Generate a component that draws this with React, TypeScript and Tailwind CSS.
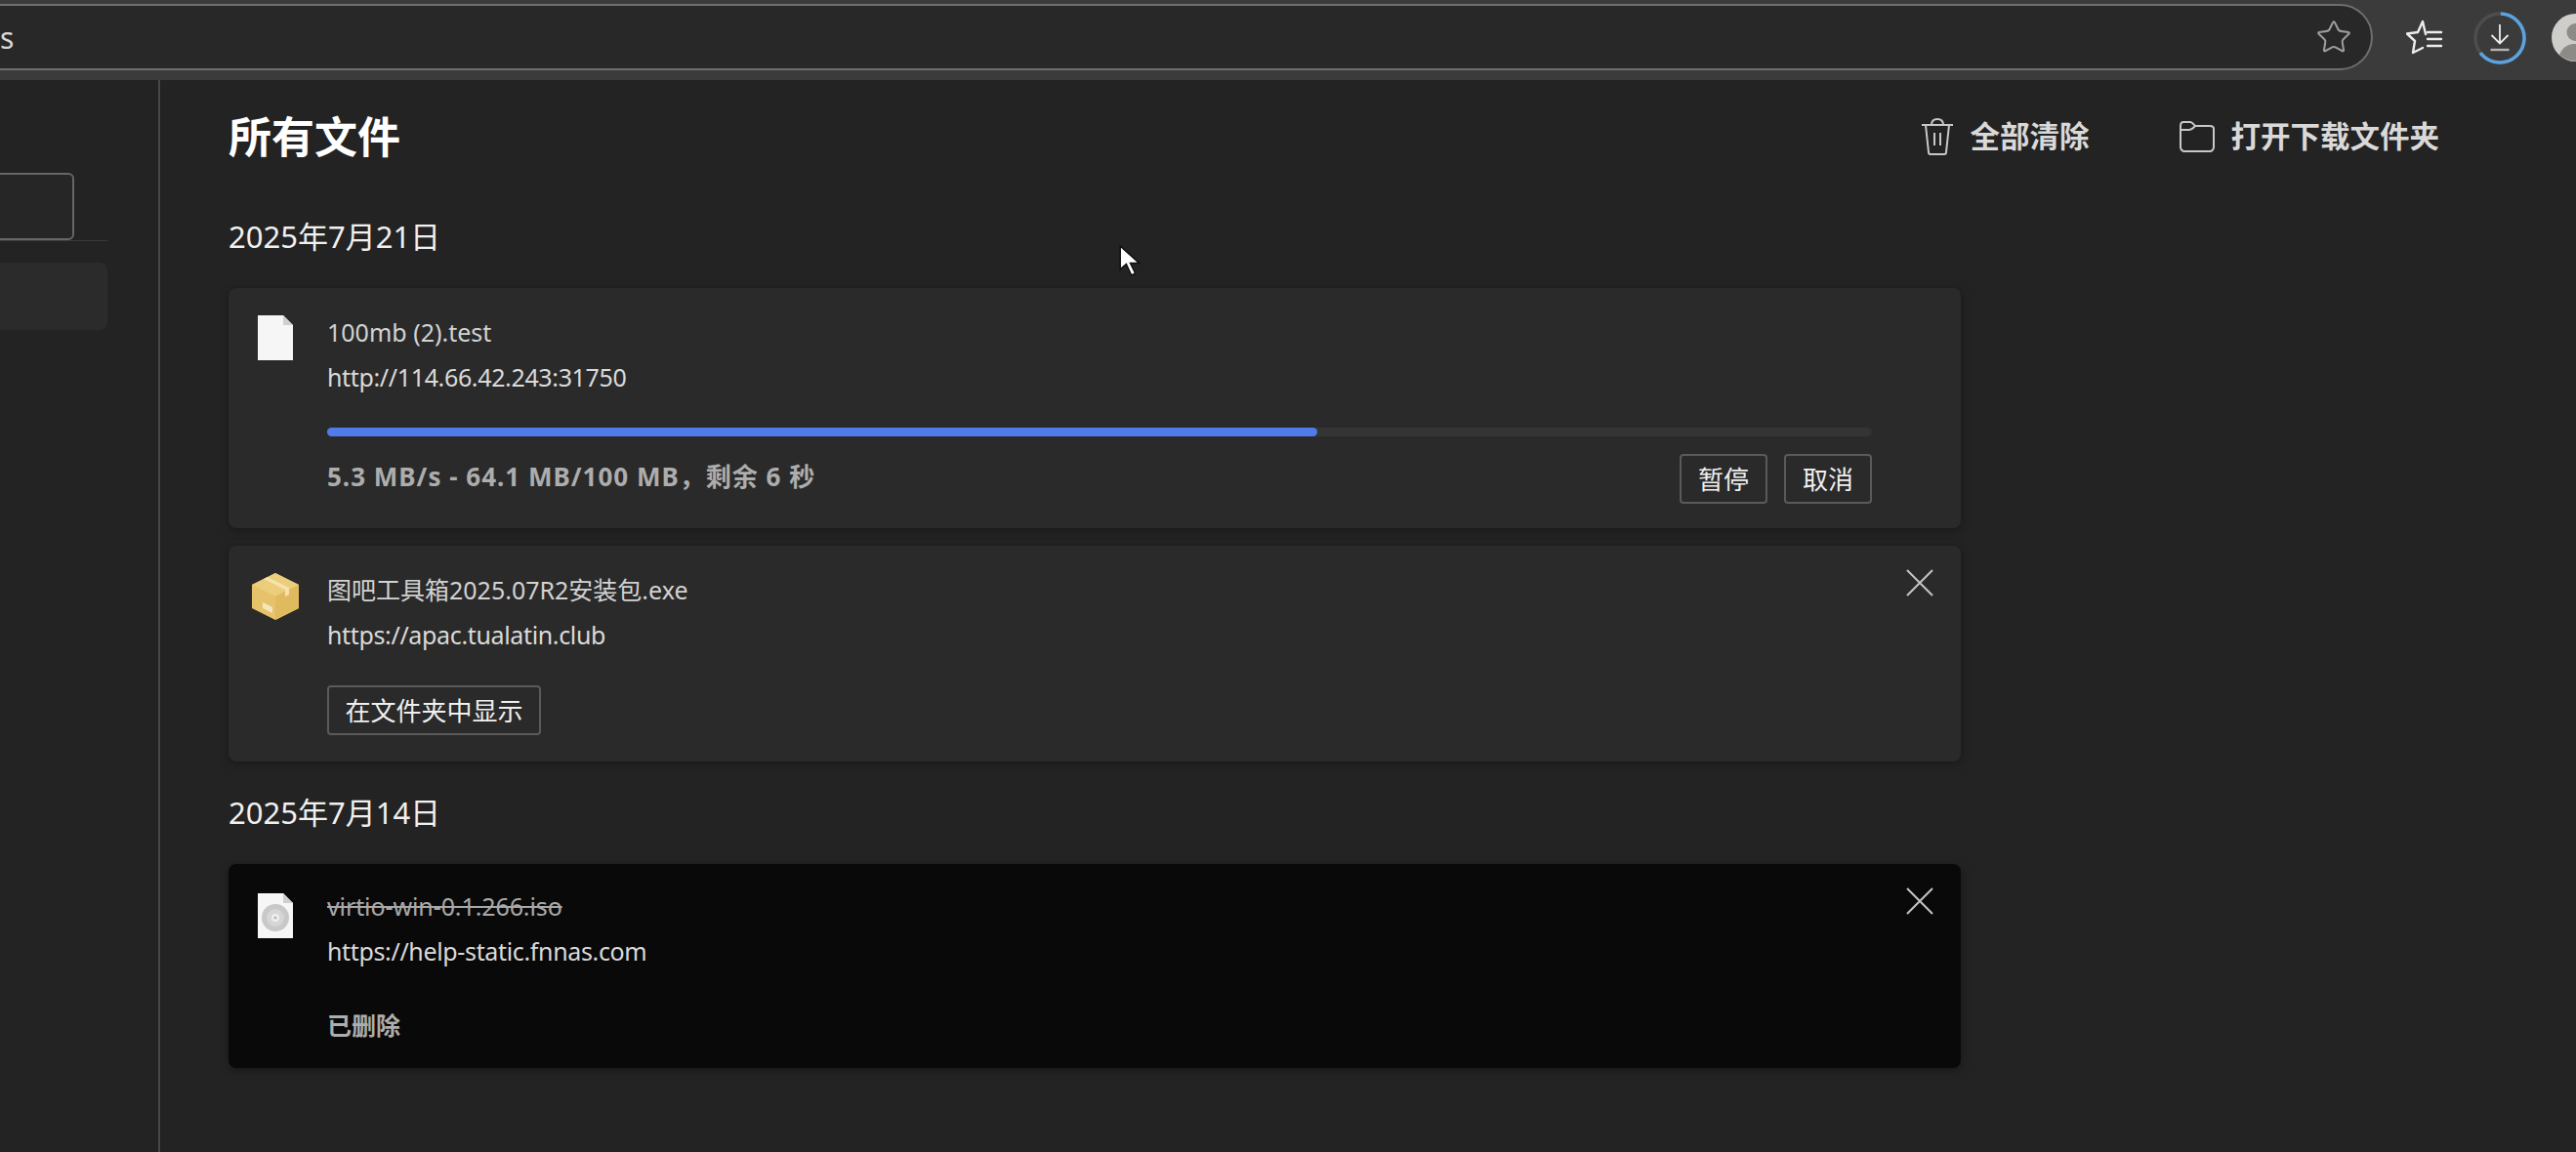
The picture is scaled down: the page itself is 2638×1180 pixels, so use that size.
import { Star } from "lucide-react"

function FileIcon({ disc }: { disc?: boolean }) {
  return (
    <svg width="38" height="48" viewBox="0 0 38 48">
      <path d="M1 1H27L37 11V47H1Z" fill="#f6f6f6" />
      <path d="M27 1L37 11H27Z" fill="#cfcfcf" />
      {disc && (
        <g>
          <circle cx="19" cy="26" r="14" fill="#c8c8c8" />
          <circle cx="19" cy="26" r="9" fill="#d6d6d6" />
          <circle cx="19" cy="26" r="4" fill="#efefef" />
          <circle cx="19" cy="26" r="1.5" fill="#b4b4b4" />
        </g>
      )}
    </svg>
  )
}

function BoxIcon() {
  return (
    <svg width="48" height="48" viewBox="0 0 48 48">
      <path d="M24 0L48 12V36L24 48L0 36V12Z" fill="#e6c26a" />
      <path d="M24 0L48 12L24 24L0 12Z" fill="#eccd7c" />
      <path d="M24 24L48 12V36L24 48Z" fill="#e0ba5e" />
      <path d="M12 6L16 4L38 15V22L34 24V17Z" fill="#f5e3ab" />
      <path d="M11 30L21 35V41L11 36Z" fill="#f3e6bd" />
    </svg>
  )
}

function CloseIcon() {
  return (
    <svg width="28" height="28" viewBox="0 0 28 28" stroke="#c4c4c4" strokeWidth="2">
      <path d="M1 1L27 27M27 1L1 27" />
    </svg>
  )
}

function Btn({ label, width }: { label: string; width: string }) {
  return (
    <button className={`h-[51px] ${width} rounded-[4px] border-2 border-[#5a5a5a] bg-[#2a2a2a] text-[26px] leading-none text-[#f0f0f0]`}>
      {label}
    </button>
  )
}

export default function App() {
  return (
    <div className="relative flex h-[1180px] w-[2638px] flex-col overflow-hidden bg-[#232323] font-['Noto_Sans','Noto_Sans_CJK_SC',sans-serif]">
      {/* Browser toolbar */}
      <div className="flex h-[82px] shrink-0 items-start bg-[#3b3b3b] pt-[4px]">
        <div className="-ml-[60px] flex h-[68px] w-[2490px] shrink-0 items-center justify-between rounded-full border-2 border-[#6e6e6e] bg-[#282828] pr-[19px] text-[30px] text-[#d8d8d8]">
          <span className="pl-[58px]">s</span>
          <Star size={38} strokeWidth={1.3} color="#9c9c9c" />
        </div>
        <svg className="ml-[34px] mt-[15px] shrink-0" width="38" height="38" viewBox="0 0 38 38" fill="none" stroke="#ececec" strokeWidth="2.4" strokeLinejoin="round" strokeLinecap="round">
          <path d="M20 16L17 3L12 14L1 15.5L9 23L7 35L17 30" />
          <path d="M22 14H36M22 21H36M22 28H36" />
        </svg>
        <svg className="ml-[30px] mt-[7px] shrink-0" width="56" height="56" viewBox="0 0 56 56" fill="none">
          <circle cx="28" cy="28" r="25" stroke="#4d4d4d" strokeWidth="3.5" />
          <circle cx="28" cy="28" r="25" stroke="#5ba3e0" strokeWidth="3.5" strokeDasharray="100 157.1" transform="rotate(-88 28 28)" />
          <path d="M28 14V33M19.5 25L28 33.5L36.5 25" stroke="#ececec" strokeWidth="1.8" />
          <path d="M18.500 40H37.500" stroke="#b5b5b5" strokeWidth="2.4" />
        </svg>
        <svg className="ml-[25px] mt-[10px] shrink-0" width="49" height="49" viewBox="0 0 49 49">
          <circle cx="24.500" cy="24.500" r="24.500" fill="#cfcdc9" />
          <circle cx="24.500" cy="19" r="9" fill="#8c8b88" />
          <path d="M8 42C12 33 18 31 24.500 31C31 31 37 33 41 42A24.500 24.500 0 0 1 8 42Z" fill="#8c8b88" />
        </svg>
      </div>

      <div className="flex flex-1">
        {/* Sidebar */}
        <aside className="w-[164px] shrink-0 overflow-hidden border-r-2 border-[#474747] pt-[95px]">
          <div className="w-[110px] border-b border-[#3a3a3a]">
            <div className="-ml-[30px] h-[69px] w-[106px] rounded-[6px] border-2 border-[#666] bg-[#262626]" />
          </div>
          <div className="-ml-[20px] mt-[22px] h-[69px] w-[130px] rounded-[8px] bg-[#2b2b2b]" />
        </aside>

        {/* Downloads */}
        <main className="flex-1 pl-[70px] pt-[28px]">
          <div className="flex h-[60px] w-[2264px] items-center justify-between">
            <h1 className="text-[44px] font-bold leading-none text-white">所有文件</h1>
            <div className="flex items-center text-[30.5px] font-bold text-[#d9d9d9]">
              <svg width="34" height="38" viewBox="0 0 34 38" fill="none" stroke="#c8c8c8" strokeWidth="2">
                <path d="M1 7H33M5 7L8 35C8 36 9 37 10 37H24C25 37 26 36 26 35L29 7M11 7C11 3 13 1 17 1C21 1 23 3 23 7M14 15V28M20 15V28" />
              </svg>
              <span className="ml-[17px]">全部清除</span>
              <svg className="ml-[92px]" width="36" height="32" viewBox="0 0 36 32" fill="none" stroke="#c8c8c8" strokeWidth="2">
                <path d="M1 5C1 3 2 1 4 1H11C13 1 14 3 16 5H31C33 5 35 6 35 8V27C35 29 33 31 31 31H5C3 31 1 29 1 27ZM1 9H10C13 9 14 7 16 5" />
              </svg>
              <span className="ml-[17px]">打开下载文件夹</span>
            </div>
          </div>

          <div className="mt-[50px] h-[44px] text-[31px] leading-[44px] text-[#f0f0f0]">2025年7月21日</div>

          {/* In-progress card */}
          <section className="mt-[31px] flex w-[1774px] rounded-[8px] bg-[#2a2a2a] shadow-[0_2px_10px_rgba(0,0,0,0.35)]">
            <div className="w-[101px] shrink-0 pl-[29px] pt-[27px]"><FileIcon /></div>
            <div className="w-[1582px] pb-[25px] pt-[22px]">
              <div className="h-[46px] text-[25px] leading-[46px] text-[#d2d2d2]">100mb (2).test</div>
              <div className="h-[46px] text-[25px] leading-[46px] tracking-[-0.35px] text-[#dadada]">http://114.66.42.243:31750</div>
              <div className="mt-[29px] h-[9px] rounded-full bg-[#343434]">
                <div className="h-[9px] w-[1014px] rounded-full bg-[#4f7ce8]" />
              </div>
              <div className="mt-[18px] flex items-center justify-between">
                <span className="pb-[4px] text-[26px] font-bold tracking-[1px] text-[#adadad]">5.3 MB/s - 64.1 MB/100 MB，剩余 6 秒</span>
                <div className="flex gap-[17px]">
                  <Btn label="暂停" width="w-[90px]" />
                  <Btn label="取消" width="w-[90px]" />
                </div>
              </div>
            </div>
          </section>

          {/* Finished card */}
          <section className="relative mt-[18px] flex w-[1774px] rounded-[8px] bg-[#2a2a2a] shadow-[0_2px_10px_rgba(0,0,0,0.35)]">
            <div className="w-[101px] shrink-0 pl-[24px] pt-[28px]"><BoxIcon /></div>
            <div className="pb-[27px] pt-[22px]">
              <div className="h-[46px] text-[25px] leading-[46px] text-[#d2d2d2]">图吧工具箱2025.07R2安装包.exe</div>
              <div className="h-[46px] text-[25px] leading-[46px] tracking-[-0.35px] text-[#dadada]">https://apac.tualatin.club</div>
              <div className="mt-[29px]"><Btn label="在文件夹中显示" width="w-[219px]" /></div>
            </div>
            <div className="absolute right-[28px] top-[24px]"><CloseIcon /></div>
          </section>

          <div className="mt-[30px] h-[44px] text-[31px] leading-[44px] text-[#f0f0f0]">2025年7月14日</div>

          {/* Deleted card */}
          <section className="relative mt-[31px] flex w-[1774px] rounded-[8px] bg-[#090909] shadow-[0_2px_10px_rgba(0,0,0,0.35)]">
            <div className="w-[101px] shrink-0 pl-[29px] pt-[29px]"><FileIcon disc /></div>
            <div className="pb-[21px] pt-[20px]">
              <div className="h-[46px] text-[25px] leading-[46px] tracking-[-0.1px] text-[#a8a8a8] line-through">virtio-win-0.1.266.iso</div>
              <div className="h-[46px] text-[25px] leading-[46px] tracking-[-0.35px] text-[#dadada]">https://help-static.fnnas.com</div>
              <div className="mt-[30px] h-[46px] text-[25px] font-bold leading-[46px] text-[#adadad]">已删除</div>
            </div>
            <div className="absolute right-[28px] top-[24px]"><CloseIcon /></div>
          </section>
        </main>
      </div>

      {/* Mouse pointer */}
      <svg className="absolute left-[1146px] top-[251px]" width="23" height="33" viewBox="0 0 22 32">
        <path d="M1 1V24L7 19L12 30L16 28L11 18H20Z" fill="#fff" stroke="#111" strokeWidth="1.5" />
      </svg>
    </div>
  )
}
